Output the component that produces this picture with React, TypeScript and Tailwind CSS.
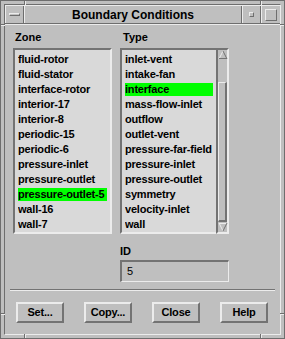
import React from "react"

const zones = [
  "fluid-rotor",
  "fluid-stator",
  "interface-rotor",
  "interior-17",
  "interior-8",
  "periodic-15",
  "periodic-6",
  "pressure-inlet",
  "pressure-outlet",
  "pressure-outlet-5",
  "wall-16",
  "wall-7",
]

const types = [
  "inlet-vent",
  "intake-fan",
  "interface",
  "mass-flow-inlet",
  "outflow",
  "outlet-vent",
  "pressure-far-field",
  "pressure-inlet",
  "pressure-outlet",
  "symmetry",
  "velocity-inlet",
  "wall",
]

const font = { fontFamily: '"Liberation Sans", Arial, sans-serif' }

function ListItems({ items, selected }: { items: string[]; selected: string }) {
  return (
    <div className="flex flex-col overflow-hidden px-[3px] pt-[2px]">
      {items.map((item) => (
        <div key={item} className="h-[15px] py-px">
          <div
            className={
              "h-[13px] leading-[13px] whitespace-nowrap overflow-hidden font-bold text-[11px] tracking-[-0.2px] text-black " +
              (item === selected ? "bg-[#00ff00]" : "")
            }
          >
            {item}
          </div>
        </div>
      ))}
    </div>
  )
}

function Arrow({ down }: { down?: boolean }) {
  return (
    <svg width="10" height="10" viewBox="0 0 10 10" className="block">
      {down ? (
        <>
          <polygon points="1,1 9,1 5,9" fill="#bfbfbf" />
          <line x1="1" y1="1.5" x2="9" y2="1.5" stroke="#ececec" />
          <line x1="1" y1="1" x2="5" y2="9" stroke="#ececec" />
          <line x1="9" y1="1" x2="5" y2="9" stroke="#737373" />
        </>
      ) : (
        <>
          <polygon points="5,1 9,9 1,9" fill="#bfbfbf" />
          <line x1="5" y1="1" x2="1" y2="9" stroke="#ececec" />
          <line x1="5" y1="1" x2="9" y2="9" stroke="#737373" />
          <line x1="1" y1="8.5" x2="9" y2="8.5" stroke="#737373" />
        </>
      )}
    </svg>
  )
}

function Button({ label }: { label: string }) {
  return (
    <div className="w-[48px] h-[21px] flex items-center justify-center bg-[#bfbfbf] border-t-2 border-l-2 border-t-[#ececec] border-l-[#ececec] border-b-2 border-r-2 border-b-[#737373] border-r-[#737373] font-bold text-[11px] tracking-[-0.2px] text-black">
      {label}
    </div>
  )
}

export default function App() {
  return (
    <div
      className="relative w-[285px] h-[339px] bg-[#bfbfbf] border border-[#6e6e6e] p-[3px] overflow-hidden"
      style={font}
    >
      {/* resize handle ticks on the frame */}
      <span className="absolute left-[23px] top-0 w-px h-[4px] bg-[#6e6e6e]" />
      <span className="absolute left-[24px] top-0 w-px h-[4px] bg-[#ececec]" />
      <span className="absolute left-[259px] top-0 w-px h-[4px] bg-[#6e6e6e]" />
      <span className="absolute left-[260px] top-0 w-px h-[4px] bg-[#ececec]" />
      <span className="absolute left-[23px] bottom-0 w-px h-[4px] bg-[#6e6e6e]" />
      <span className="absolute left-[24px] bottom-0 w-px h-[4px] bg-[#ececec]" />
      <span className="absolute left-[259px] bottom-0 w-px h-[4px] bg-[#6e6e6e]" />
      <span className="absolute left-[260px] bottom-0 w-px h-[4px] bg-[#ececec]" />
      <span className="absolute left-0 top-[23px] h-px w-[4px] bg-[#6e6e6e]" />
      <span className="absolute left-0 top-[24px] h-px w-[4px] bg-[#ececec]" />
      <span className="absolute right-0 top-[23px] h-px w-[4px] bg-[#6e6e6e]" />
      <span className="absolute right-0 top-[24px] h-px w-[4px] bg-[#ececec]" />
      <span className="absolute left-0 top-[312px] h-px w-[4px] bg-[#6e6e6e]" />
      <span className="absolute left-0 top-[313px] h-px w-[4px] bg-[#ececec]" />
      <span className="absolute right-0 top-[312px] h-px w-[4px] bg-[#6e6e6e]" />
      <span className="absolute right-0 top-[313px] h-px w-[4px] bg-[#ececec]" />

      <div className="h-full flex flex-col border border-t-[#6e6e6e] border-l-[#6e6e6e] border-b-[#ececec] border-r-[#ececec]">
        {/* title bar */}
        <div className="h-[19px] flex border-b border-b-[#6e6e6e] shadow-[0_1px_0_#ececec] border-t border-t-[#ececec]">
          <div className="w-[19px] flex items-center justify-center border-r border-r-[#6e6e6e] border-l border-l-[#ececec]">
            <div className="w-[11px] h-[3px] bg-[#bfbfbf] border-t border-l border-t-[#ececec] border-l-[#ececec] border-b border-r border-b-[#6e6e6e] border-r-[#6e6e6e]" />
          </div>
          <div className="flex-1 flex items-center justify-center font-bold text-[12px] text-black border-l border-l-[#ececec] border-r border-r-[#6e6e6e]">
            Boundary Conditions
          </div>
          <div className="w-[19px] flex items-center justify-center border-l border-l-[#ececec] border-r border-r-[#6e6e6e]">
            <div className="w-[5px] h-[5px] bg-[#bfbfbf] border-t border-l border-t-[#ececec] border-l-[#ececec] border-b border-r border-b-[#6e6e6e] border-r-[#6e6e6e]" />
          </div>
          <div className="w-[19px] flex items-center justify-center border-l border-l-[#ececec]">
            <div className="w-[12px] h-[12px] bg-[#bfbfbf] border-t border-l border-t-[#ececec] border-l-[#ececec] border-b border-r border-b-[#6e6e6e] border-r-[#6e6e6e]" />
          </div>
        </div>

        {/* client area */}
        <div className="flex-1 flex flex-col mt-px pt-[6px] px-[7px]">
          <div className="grid grid-cols-[99px_109px] gap-x-[8px] ml-px">
            <div className="h-[13px] leading-[13px] font-bold text-[11px] text-black pl-[2px]">Zone</div>
            <div className="h-[13px] leading-[13px] font-bold text-[11px] text-black pl-[3px]">Type</div>

            <div className="mt-[4px] h-[186px] bg-[#d9d9d9] border-t-2 border-l-2 border-t-[#737373] border-l-[#737373] border-b-2 border-r-2 border-b-[#ececec] border-r-[#ececec]">
              <ListItems items={zones} selected="pressure-outlet-5" />
            </div>

            <div className="mt-[4px] h-[186px] flex">
              <div className="flex-1 min-w-0 bg-[#d9d9d9] border-t-2 border-l-2 border-t-[#737373] border-l-[#737373] border-b-2 border-b-[#ececec]">
                <ListItems items={types} selected="interface" />
              </div>
              <div className="w-[13px] flex flex-col bg-[#bfbfbf] border-t-2 border-l-2 border-t-[#737373] border-l-[#737373] border-b-2 border-r-2 border-b-[#ececec] border-r-[#ececec]">
                <Arrow />
                <div className="flex-1 flex flex-col pt-[22px]">
                  <div className="flex-1 bg-[#bfbfbf] border-t border-l border-t-[#ececec] border-l-[#ececec] border-b-2 border-r-2 border-b-[#737373] border-r-[#737373]" />
                </div>
                <Arrow down />
              </div>
            </div>

            <div />
            <div className="mt-[11px] flex flex-col">
              <div className="h-[13px] leading-[13px] font-bold text-[11px] text-black">ID</div>
              <div className="mt-[2px] h-[22px] flex items-center pl-[5px] text-[11px] text-black border-t-2 border-l-2 border-t-[#737373] border-l-[#737373] border-b border-r border-b-[#ececec] border-r-[#ececec]">
                5
              </div>
            </div>
          </div>

          <div className="mt-[7px] mx-[-2px] h-[2px] border-t border-t-[#737373] border-b border-b-[#ececec]" />

          <div className="mt-[11px] flex gap-[20px] pl-[4px]">
            <Button label="Set..." />
            <Button label="Copy..." />
            <Button label="Close" />
            <Button label="Help" />
          </div>
        </div>
      </div>
    </div>
  )
}
